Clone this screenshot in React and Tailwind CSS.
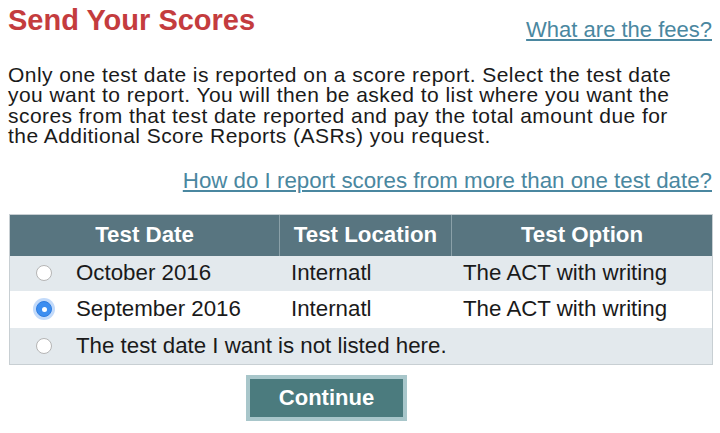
import { useState } from 'react'

const ROWS = [
  { id: 'oct', date: 'October 2016', location: 'Internatl', option: 'The ACT with writing' },
  { id: 'sep', date: 'September 2016', location: 'Internatl', option: 'The ACT with writing' },
]

function Radio({ checked, onClick }) {
  return (
    <button
      onClick={onClick}
      className={[
        'w-[16px] h-[16px] rounded-full flex items-center justify-center',
        checked
          ? 'bg-[#3d8ef0] border border-[#2f7de0] shadow-[0_0_0_3px_rgba(80,150,240,0.35)]'
          : 'bg-white border border-[#b5b5b5]',
      ].join(' ')}
    >
      {checked && <span className="w-[5px] h-[5px] rounded-full bg-white" />}
    </button>
  )
}

export default function App() {
  const [selected, setSelected] = useState('sep')

  return (
    <div className="w-[720px] h-[433px] bg-white px-2 font-['Liberation_Sans',Arial,sans-serif] text-[#1a1a1a] overflow-hidden">
      {/* Title row */}
      <div className="flex items-start justify-between">
        <h1 className="text-[29px] leading-[40px] font-bold text-[#c43c3e]">Send Your Scores</h1>
        <a href="#" className="mt-[19px] text-[22px] leading-[22px] text-[#4a87a0] underline underline-offset-2">
          What are the fees?
        </a>
      </div>

      {/* Intro */}
      <p className="mt-[24px] text-[21px] leading-[20.4px] tracking-[0.45px]">
        Only one test date is reported on a score report. Select the test date
        <br />
        you want to report. You will then be asked to list where you want the
        <br />
        scores from that test date reported and pay the total amount due for
        <br />
        the Additional Score Reports (ASRs) you request.
      </p>

      <div className="mt-[23px] flex justify-end">
        <a href="#" className="text-[22.3px] leading-[22px] text-[#4a87a0] underline underline-offset-2">
          How do I report scores from more than one test date?
        </a>
      </div>

      {/* Table */}
      <div className="mt-[22px] ml-[1px] w-[704px] border border-[#c8cfd3] text-[22.3px]">
        <div className="grid grid-cols-[269px_172px_1fr] bg-[#587580] text-white font-bold h-[41px]">
          <div className="flex items-center justify-center">Test Date</div>
          <div className="flex items-center justify-center border-l border-[#8aa0a8]">Test Location</div>
          <div className="flex items-center justify-center border-l border-[#8aa0a8]">Test Option</div>
        </div>

        {ROWS.map((row, i) => (
          <div
            key={row.id}
            className={[
              'grid grid-cols-[269px_172px_1fr] items-center',
              i === 0 ? 'h-[35px] bg-[#e3e9ed]' : 'h-[37px] bg-white',
            ].join(' ')}
          >
            <div className="flex items-center">
              <div className="w-[66px] flex justify-center pl-[2px]">
                <Radio checked={selected === row.id} onClick={() => setSelected(row.id)} />
              </div>
              <span>{row.date}</span>
            </div>
            <div className="pl-[12px]">{row.location}</div>
            <div className="pl-[12px]">{row.option}</div>
          </div>
        ))}

        <div className="h-[36px] bg-[#e3e9ed] flex items-center">
          <div className="w-[66px] flex justify-center pl-[2px]">
            <Radio checked={selected === 'none'} onClick={() => setSelected('none')} />
          </div>
          <span>The test date I want is not listed here.</span>
        </div>
      </div>

      {/* Continue */}
      <div className="mt-[10px] flex justify-center">
        <button className="ml-[-67px] w-[161px] h-[46px] bg-[#4b7b7e] border-[4px] border-[#a8c6ca] text-white font-bold text-[22px]">
          Continue
        </button>
      </div>
    </div>
  )
}
